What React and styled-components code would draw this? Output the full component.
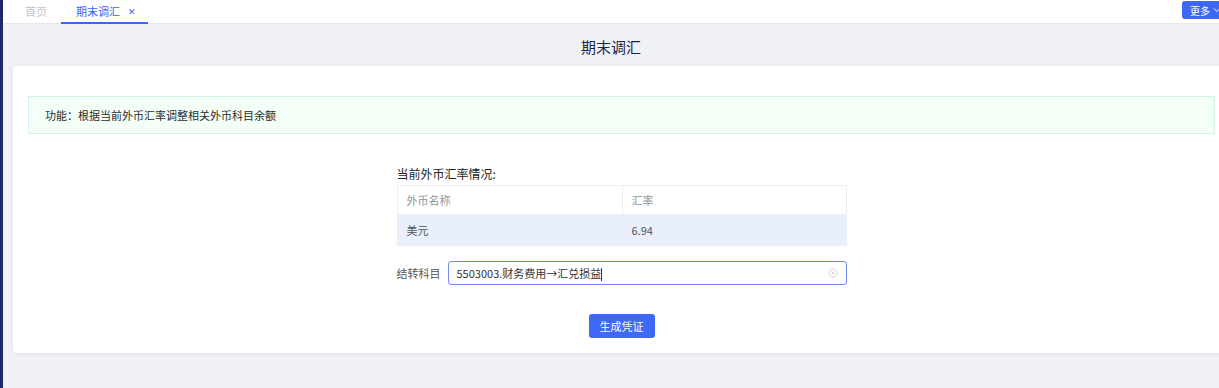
import React from 'react';
import styled, { createGlobalStyle } from 'styled-components';

const GlobalStyle = createGlobalStyle`
  html, body {
    margin: 0;
    padding: 0;
    background: #f0f1f5;
    font-family: "Noto Sans CJK SC", "Noto Sans", "Liberation Sans", sans-serif;
    font-size: 11px;
    color: #333;
  }
  * { box-sizing: border-box; }
`;

const Page = styled.div`
  display: flex;
  width: 1219px;
  height: 388px;
  overflow: hidden;
`;

const Sidebar = styled.div`
  width: 3px;
  flex-shrink: 0;
  background: #21286a;
`;

const Main = styled.div`
  flex: 1;
  display: flex;
  flex-direction: column;
  min-width: 0;
  background: #f0f1f5;
`;

const TabBar = styled.div`
  height: 24px;
  display: flex;
  align-items: stretch;
  justify-content: space-between;
  background: #fff;
  border-bottom: 1px solid #e6e8ee;
  padding-left: 7px;
`;

const Tabs = styled.div`
  display: flex;
  align-items: stretch;
`;

const Tab = styled.div`
  display: flex;
  align-items: center;
  gap: 8px;
  white-space: nowrap;
  padding: ${p => (p.$active ? '0 12px 0 15px' : '0 14px 0 15px')};
  margin-bottom: -1px;
  color: ${p => (p.$active ? '#3a66f5' : '#c3c6cd')};
  border-bottom: 2px solid ${p => (p.$active ? '#3a66f5' : 'transparent')};
  line-height: 1;
`;

const Close = styled.span`
  font-size: 9px;
  color: #3a66f5;
`;

const MoreButton = styled.div`
  align-self: flex-start;
  margin-top: 1px;
  margin-right: -8px;
  height: 18px;
  width: 45px;
  display: flex;
  align-items: center;
  gap: 3px;
  padding-left: 8px;
  white-space: nowrap;
  background: #3d67f6;
  color: #fff;
  font-size: 10px;
  border-radius: 3px;
`;

const Heading = styled.div`
  height: 42px;
  display: flex;
  align-items: center;
  justify-content: center;
  padding-top: 2px;
  font-size: 15px;
  color: #1d2450;
`;

const Card = styled.div`
  margin: 0 -10px 0 10px;
  background: #fff;
  border-radius: 3px;
  box-shadow: 0 1px 5px rgba(30, 40, 80, 0.08);
  padding: 30px 14px 15px 15px;
  display: flex;
  flex-direction: column;
  align-items: center;
`;

const Alert = styled.div`
  align-self: stretch;
  height: 38px;
  display: flex;
  align-items: center;
  padding-left: 16px;
  background: #f4fff8;
  border: 1px solid #d3f5df;
  color: #2b2b2b;
`;

const Block = styled.div`
  width: 450px;
  margin-top: 31px;
  display: flex;
  flex-direction: column;
`;

const Caption = styled.div`
  font-size: 12px;
  color: #222;
  line-height: 18px;
  margin-bottom: 2px;
`;

const Table = styled.div`
  border: 1px solid #ebeef5;
`;

const Row = styled.div`
  display: grid;
  grid-template-columns: 224px 1fr;
  height: ${p => p.$h}px;
  background: ${p => p.$bg || '#fff'};
  border-top: ${p => (p.$first ? 'none' : '1px solid #ebeef5')};
`;

const Cell = styled.div`
  display: flex;
  align-items: center;
  padding-left: 9px;
  color: ${p => (p.$head ? '#909399' : '#555')};
  border-left: ${p => (p.$split ? '1px solid #ebeef5' : 'none')};
`;

const FieldRow = styled.div`
  display: flex;
  align-items: center;
  margin-top: 15px;
`;

const Label = styled.div`
  width: 51px;
  color: #555;
`;

const Input = styled.div`
  flex: 1;
  height: 24px;
  display: flex;
  align-items: center;
  justify-content: space-between;
  border: 1px solid #6f8cf2;
  border-radius: 3px;
  padding: 0 8px 0 8px;
  color: #333;
`;

const Caret = styled.span`
  display: inline-block;
  width: 1px;
  height: 13px;
  background: #333;
  vertical-align: middle;
`;

const SubmitButton = styled.div`
  margin-top: 29px;
  width: 66px;
  height: 24px;
  border-radius: 3px;
  background: #3e68f6;
  color: #fff;
  display: flex;
  align-items: center;
  justify-content: center;
`;

const ClearIcon = () => (
  <svg width="10" height="10" viewBox="0 0 12 12">
    <circle cx="6" cy="6" r="5" fill="none" stroke="#c8cbd2" strokeWidth="1" />
    <path d="M4.2 4.2L7.8 7.8M7.8 4.2L4.2 7.8" stroke="#c8cbd2" strokeWidth="1" />
  </svg>
);

const Chevron = () => (
  <svg width="8" height="8" viewBox="0 0 8 8">
    <path d="M1 2.5L4 5.5L7 2.5" fill="none" stroke="#fff" strokeWidth="1" />
  </svg>
);

export default function App() {
  return (
    <>
      <GlobalStyle />
      <Page>
        <Sidebar />
        <Main>
          <TabBar>
            <Tabs>
              <Tab>首页</Tab>
              <Tab $active>
                期末调汇<Close>✕</Close>
              </Tab>
            </Tabs>
            <MoreButton>
              更多<Chevron />
            </MoreButton>
          </TabBar>
          <Heading>期末调汇</Heading>
          <Card>
            <Alert>功能：根据当前外币汇率调整相关外币科目余额</Alert>
            <Block>
              <Caption>当前外币汇率情况:</Caption>
              <Table>
                <Row $first $h={28}>
                  <Cell $head>外币名称</Cell>
                  <Cell $head $split>汇率</Cell>
                </Row>
                <Row $h={31} $bg="#e9effd">
                  <Cell>美元</Cell>
                  <Cell $split>6.94</Cell>
                </Row>
              </Table>
              <FieldRow>
                <Label>结转科目</Label>
                <Input>
                  <span>
                    5503003.财务费用→汇兑损益<Caret />
                  </span>
                  <ClearIcon />
                </Input>
              </FieldRow>
            </Block>
            <SubmitButton>生成凭证</SubmitButton>
          </Card>
        </Main>
      </Page>
    </>
  );
}
